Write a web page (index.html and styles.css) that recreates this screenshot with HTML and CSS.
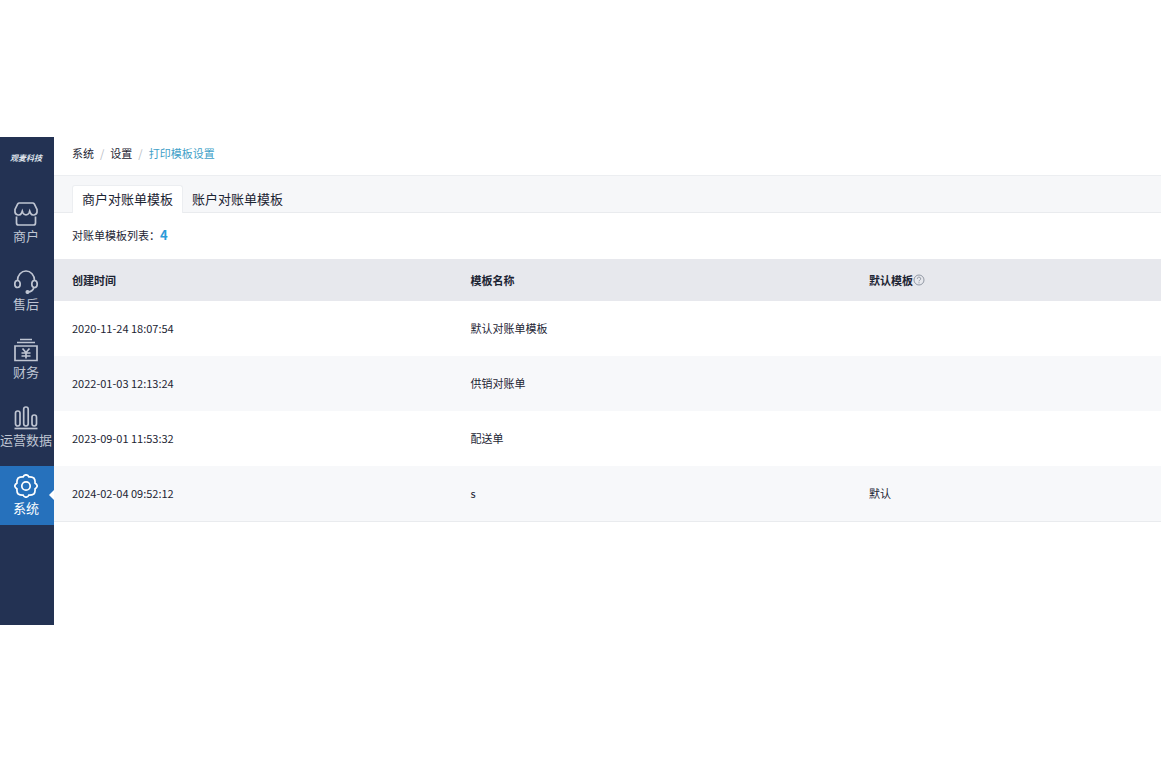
FILE: index.html
```html
<!DOCTYPE html>
<html lang="zh-CN">

<head>
    <meta charset="utf-8">
    <title>打印模板设置</title>
    <link rel="stylesheet" href="styles.css">
</head>

<body>
    <div class="app">
        <nav class="sidebar">
            <div class="logo">观麦科技</div>
            <a class="nav-item" href="#">
                <svg class="icon" viewBox="0 0 24 24">
                    <path d="M5.500 1h13a2 2 0 0 1 1.800 1L23 7.500V9a3.500 3.500 0 0 1-6.500 2.200L15.700 9L15 11a3.300 3.300 0 0 1-6 0L8.300 9l-.8 2.200A3.500 3.500 0 0 1 1 9V7.500L3.700 2a2 2 0 0 1 1.800-1z" />
                    <path d="M2.500 14.500V21a2 2 0 0 0 2 2h15a2 2 0 0 0 2-2v-6.500" />
                </svg>
                <span>商户</span>
            </a>
            <a class="nav-item" href="#">
                <svg class="icon" viewBox="0 0 24 24">
                    <path d="M3.500 10.500a8.500 9.500 0 0 1 17 0" />
                    <ellipse cx="3.500" cy="14" rx="2.700" ry="3.500" />
                    <ellipse cx="20.500" cy="14" rx="2.700" ry="3.500" />
                    <path d="M20 17.500c-1 3-3 4.300-6 4.500" />
                    <circle class="solid" cx="13.500" cy="22" r="1.200" />
                </svg>
                <span>售后</span>
            </a>
            <a class="nav-item" href="#">
                <svg class="icon" viewBox="0 0 24 24">
                    <path d="M6 1.500h12M3 4.500h18M1 8h22v14.500H1z" />
                    <path d="M8.500 10.500l3.500 4l3.500-4M12 14.500v6M7.500 15h9M7.500 18h9" />
                </svg>
                <span>财务</span>
            </a>
            <a class="nav-item" href="#">
                <svg class="icon" viewBox="0 0 24 24">
                    <path d="M.5 22.500h23" />
                    <rect x="1.500" y="5" width="4.500" height="15" rx="2.200" />
                    <rect x="9.700" y="1" width="4.500" height="19" rx="2.200" />
                    <rect x="18" y="9" width="4.500" height="11" rx="2.200" />
                </svg>
                <span>运营数据</span>
            </a>
            <a class="nav-item active" href="#">
                <svg class="icon" viewBox="0 0 24 24">
                    <path d="M12 .8Q14 .8 15 3Q17.500 2.800 19.900 4.100Q21.400 6 21 9Q23.200 10.500 23.200 12Q23.200 13.500 21 15Q21.400 18 19.900 19.900Q17.500 21.200 15 21Q14 23.200 12 23.200Q10 23.200 9 21Q6.500 21.200 4.100 19.900Q2.600 18 3 15Q.8 13.500 .8 12Q.8 10.500 3 9Q2.600 6 4.100 4.100Q6.500 2.800 9 3Q10 .8 12 .8z" />
                    <circle cx="12" cy="12" r="4.200" />
                </svg>
                <span>系统</span>
            </a>
        </nav>
        <main class="content">
            <div class="breadcrumb">
                <a href="#">系统</a>
                <span class="slash">/</span>
                <a href="#">设置</a>
                <span class="slash">/</span>
                <a class="current" href="#">打印模板设置</a>
            </div>
            <div class="tabs">
                <button class="tab active" type="button">商户对账单模板</button>
                <button class="tab" type="button">账户对账单模板</button>
            </div>
            <div class="summary">对账单模板列表：<b>4</b></div>
            <table class="list">
                <colgroup>
                    <col class="col-time">
                    <col class="col-name">
                    <col>
                </colgroup>
                <thead>
                    <tr>
                        <th>创建时间</th>
                        <th>模板名称</th>
                        <th>
                            <div class="th-tip">默认模板<svg class="help" viewBox="0 0 12 12">
                                    <circle cx="6" cy="6" r="5" />
                                    <path d="M4.300 4.800a1.700 1.600 0 1 1 2.500 1.300Q6 6.500 6 7.300M6 8.300v1" />
                                </svg></div>
                        </th>
                    </tr>
                </thead>
                <tbody>
                    <tr>
                        <td>2020-11-24 18:07:54</td>
                        <td>默认对账单模板</td>
                        <td></td>
                    </tr>
                    <tr>
                        <td>2022-01-03 12:13:24</td>
                        <td>供销对账单</td>
                        <td></td>
                    </tr>
                    <tr>
                        <td>2023-09-01 11:53:32</td>
                        <td>配送单</td>
                        <td></td>
                    </tr>
                    <tr>
                        <td>2024-02-04 09:52:12</td>
                        <td>s</td>
                        <td>默认</td>
                    </tr>
                </tbody>
            </table>
        </main>
    </div>
</body>

</html>
```
FILE: styles.css
```css
* {
    box-sizing: border-box;
    margin: 0;
    padding: 0;
}

body {
    padding: 137px 0;
    background-color: #fff;
    color: #1c2433;
    font-family: "Noto Sans CJK SC", sans-serif;
    font-size: 11px;
    line-height: 16px;
}

a {
    color: inherit;
    text-decoration: none;
}

.app {
    display: flex;
}

/* sidebar */
.sidebar {
    display: flex;
    flex-direction: column;
    gap: 9px;
    flex: 0 0 54px;
    padding-bottom: 100px;
    background-color: #233253;
}

.logo {
    height: 48px;
    padding: 13px 2px 0 0;
    color: #dfe3ec;
    font-size: 8px;
    font-style: italic;
    font-weight: bold;
    text-align: center;
}

.nav-item {
    display: flex;
    flex-direction: column;
    align-items: center;
    gap: 2px;
    height: 59px;
    padding: 8px 2px 0 0;
    position: relative;
    color: #bfc5d2;
    font-size: 13px;
    white-space: nowrap;
}

.nav-item.active {
    background-color: #2671bc;
    color: #fff;
}

.nav-item.active::after {
    content: "";
    position: absolute;
    right: 0;
    top: 24px;
    border: 5px solid transparent;
    border-left-width: 0;
    border-right-color: #fff;
}

.icon {
    width: 24px;
    height: 24px;
    fill: none;
    stroke: currentColor;
    stroke-width: 1.7;
}

.icon .solid {
    fill: currentColor;
}

/* content */
.content {
    flex: 1;
    min-width: 0;
}

.breadcrumb {
    display: flex;
    gap: 6px;
    padding: 8px 18px 14px;
    border-bottom: 1px solid #eceef1;
}

.breadcrumb .slash {
    color: #b8bcc4;
}

.breadcrumb .current {
    color: #3f9fc8;
}

.tabs {
    display: flex;
    padding: 9px 18px 0;
    background-color: #f6f7f9;
    border-bottom: 1px solid #e9ebee;
}

.tab {
    height: 28px;
    margin-bottom: -1px;
    padding: 0 9px 2px;
    border: 1px solid transparent;
    border-bottom: 0;
    border-radius: 3px 3px 0 0;
    background: none;
    color: inherit;
    font-family: inherit;
    font-size: 13px;
}

.tab + .tab {
    margin-left: -1px;
}

.tab.active {
    background-color: #fff;
    border-color: #eceef1;
}

.summary {
    padding: 14px 18px 16px;
}

.summary b {
    color: #2b9bd8;
    font-size: 13px;
}

.list {
    width: 100%;
    border-collapse: collapse;
    table-layout: fixed;
    border-bottom: 1px solid #e9ebee;
}

.col-time,
.col-name {
    width: 36%;
}

.list th,
.list td {
    padding: 0 18px;
    text-align: left;
    vertical-align: middle;
}

.list th {
    height: 42px;
    background-color: #e7e8ed;
}

.list td {
    height: 55px;
    padding-bottom: 1px;
}

.list tbody tr:nth-child(even) {
    background-color: #f7f8fa;
}

.th-tip {
    display: flex;
    align-items: center;
}

.help {
    width: 12px;
    height: 12px;
    fill: none;
    stroke: #7c8492;
    stroke-width: 0.8;
}
```
